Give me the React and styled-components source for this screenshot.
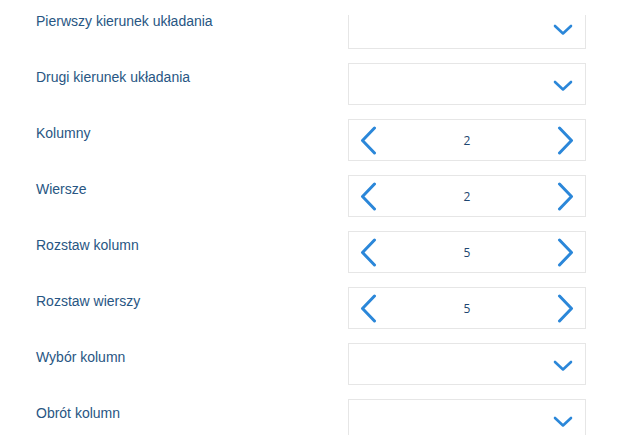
import React from 'react'
import styled, { createGlobalStyle } from 'styled-components'

const rows = [
  { label: 'Pierwszy kierunek układania', type: 'select', cut: true },
  { label: 'Drugi kierunek układania', type: 'select' },
  { label: 'Kolumny', type: 'stepper', value: 2 },
  { label: 'Wiersze', type: 'stepper', value: 2 },
  { label: 'Rozstaw kolumn', type: 'stepper', value: 5 },
  { label: 'Rozstaw wierszy', type: 'stepper', value: 5 },
  { label: 'Wybór kolumn', type: 'select' },
  { label: 'Obrót kolumn', type: 'select' },
]

const blue = '#2b87d9'

const ChevronDown = () => (
  <svg width="20" height="12" viewBox="0 0 20 12">
    <polyline points="2,2 10,9.5 18,2" fill="none" stroke={blue} strokeWidth="2.6" strokeLinecap="round" strokeLinejoin="round" />
  </svg>
)

const ChevronSide = ({ dir }) => (
  <svg width="17" height="29" viewBox="0 0 17 29">
    {dir === 'left'
      ? <polyline points="14.5,2 2.5,14.5 14.5,27" fill="none" stroke={blue} strokeWidth="3" strokeLinecap="round" strokeLinejoin="round" />
      : <polyline points="2.5,2 14.5,14.5 2.5,27" fill="none" stroke={blue} strokeWidth="3" strokeLinecap="round" strokeLinejoin="round" />}
  </svg>
)

const App = () => {
  return (
    <>
      <GlobalStyle />
      <StyledForm>
        { rows.map((row, index) => (
          <React.Fragment key={index}>
            <StyledLabel>{ row.label }</StyledLabel>
            { row.type === 'select' ? (
              <StyledSelect $cut={row.cut}>
                <ChevronDown />
              </StyledSelect>
            ) : (
              <StyledStepper>
                <StyledArrow><ChevronSide dir="left" /></StyledArrow>
                <StyledValue>{ row.value }</StyledValue>
                <StyledArrow><ChevronSide dir="right" /></StyledArrow>
              </StyledStepper>
            ) }
          </React.Fragment>
        )) }
      </StyledForm>
    </>
  )
}

export default App

const GlobalStyle = createGlobalStyle`
  html, body {
    margin: 0;
    background: #fff;
    overflow: hidden;
  }
`

const StyledForm = styled.div`
  display: grid;
  grid-template-columns: 312px 238px;
  grid-auto-rows: 42px;
  row-gap: 14px;
  padding: 7px 0 0 36px;
  height: 435px;
  box-sizing: border-box;
  overflow: hidden;
`

const StyledLabel = styled.div`
  font-family: "Liberation Sans", Arial, sans-serif;
  font-size: 14px;
  line-height: 18px;
  color: #285683;
  padding-top: 5px;
`

const StyledField = styled.div`
  box-sizing: border-box;
  height: 42px;
  border: 1px solid #e6e6e6;
  background: #fff;
`

const StyledSelect = styled(StyledField)`
  display: flex;
  align-items: center;
  justify-content: flex-end;
  padding: 4px 12px 0 0;
  ${({ $cut }) => $cut && `
    clip-path: inset(8px 0 0 0);
  `}
`

const StyledStepper = styled(StyledField)`
  display: flex;
  align-items: center;
  justify-content: space-between;
  padding: 0 11px 0 11px;
`

const StyledArrow = styled.div`
  display: flex;
  align-items: center;
  cursor: pointer;
`

const StyledValue = styled.span`
  font-family: "Open Sans", sans-serif;
  font-size: 12px;
  color: #1d4670;
`
